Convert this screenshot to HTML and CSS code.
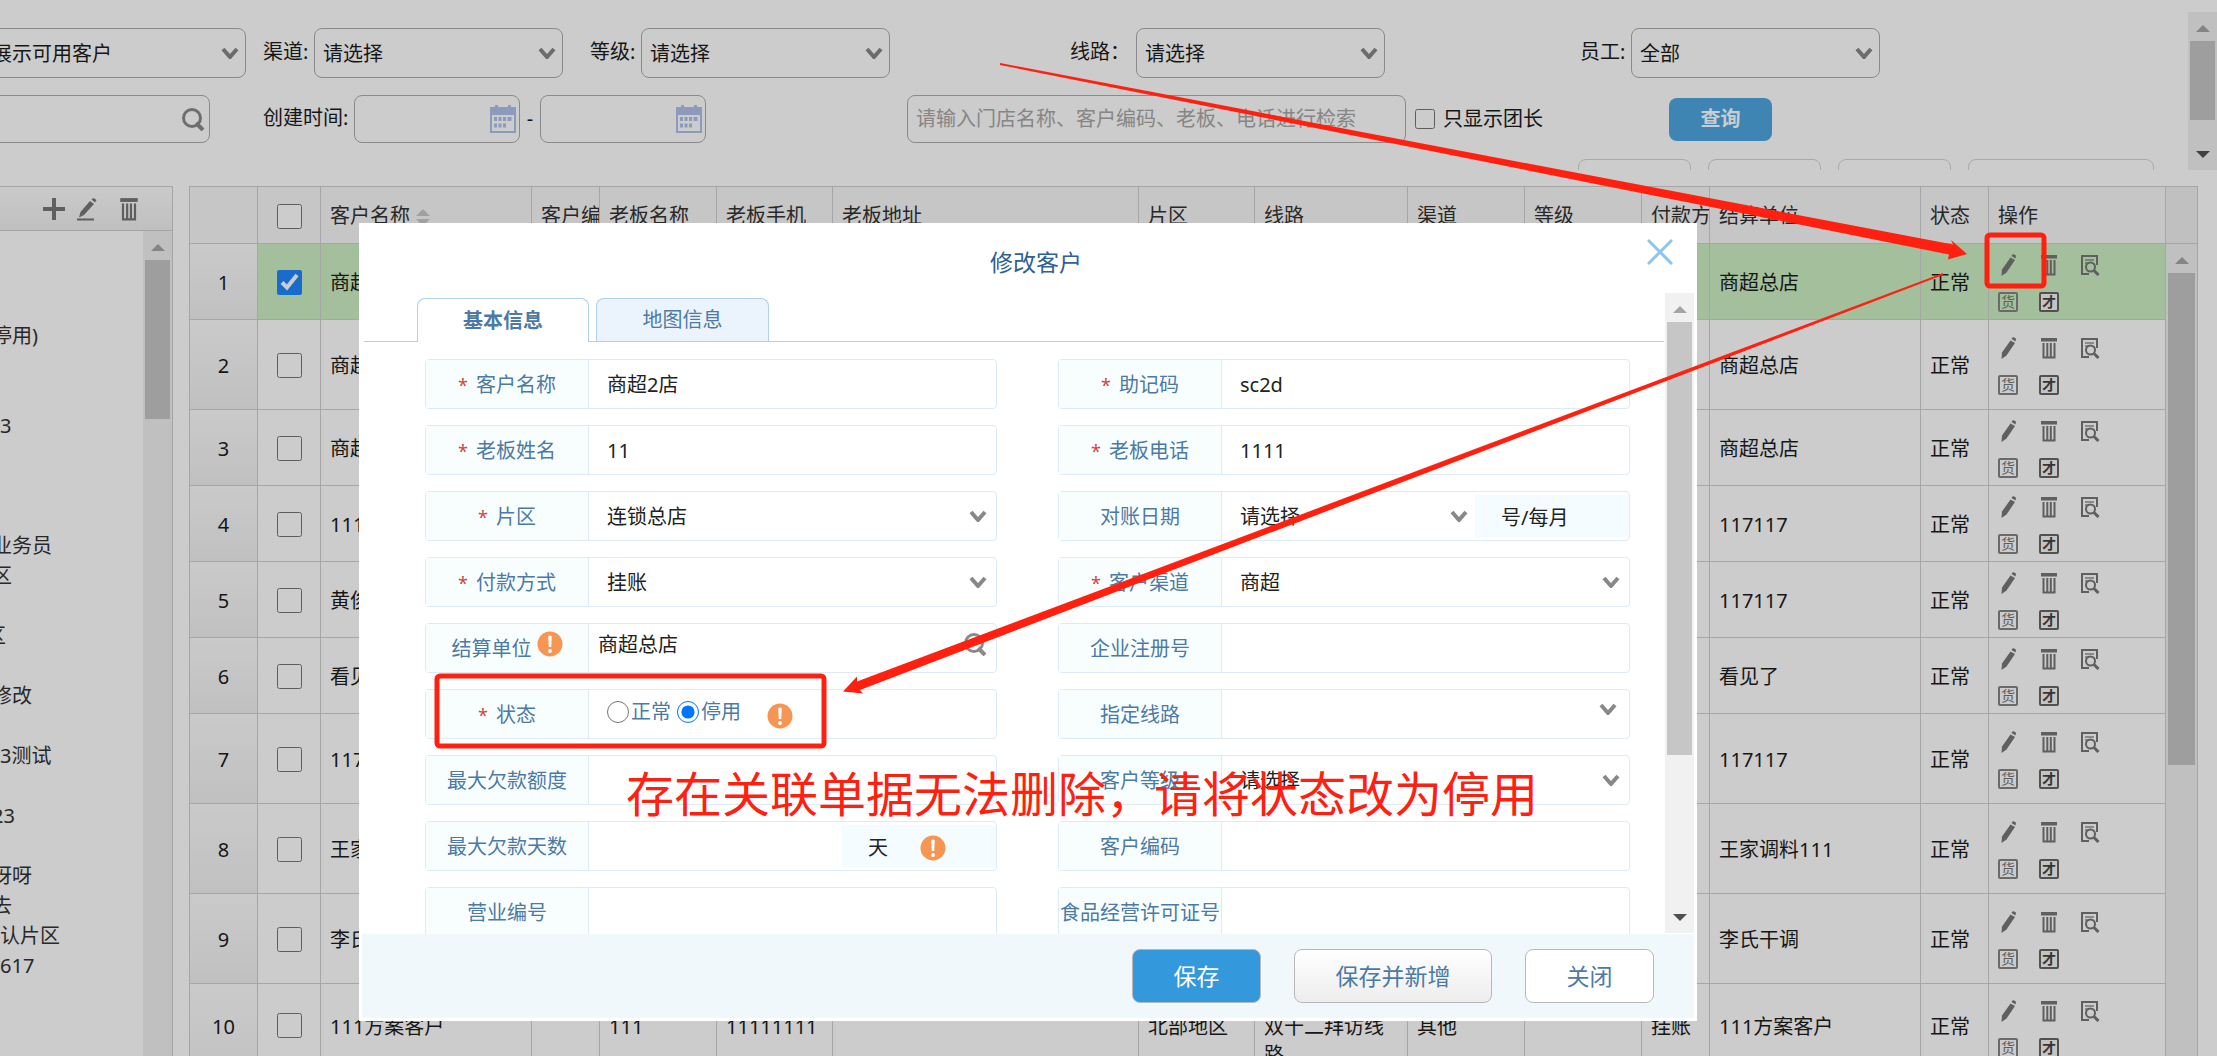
FILE: index.html
```html
<!DOCTYPE html>
<html lang="zh-CN">
<head>
<meta charset="utf-8">
<title>客户管理</title>
<meta name="viewport" content="width=device-width, initial-scale=1">
<link rel="stylesheet" href="styles.css">
</head>
<body>
<svg class="sprite" aria-hidden="true">
  <symbol id="i-pencil" viewBox="0 0 20 22"><path d="M12.500 3.500l4.500 2.500L8.500 18.500 3.500 22l.5-6.500z" fill="currentColor"/><path d="M13.500 2l1.500-2 3 1.500-.5 3z" fill="currentColor"/></symbol>
  <symbol id="i-trash" viewBox="0 0 20 22"><path d="M2 1h16v3.500H2z" fill="currentColor"/><path d="M4.500 6v14.500h11V6M8.300 6v14M11.800 6v14" fill="none" stroke="currentColor" stroke-width="2"/></symbol>
  <symbol id="i-detail" viewBox="0 0 20 22"><path d="M9 20H2V2h15v9" fill="none" stroke="currentColor" stroke-width="2"/><path d="M5 6h9M5 9h4" stroke="currentColor" stroke-width="2" opacity=".6"/><circle cx="10.500" cy="13" r="4.500" fill="none" stroke="currentColor" stroke-width="2"/><path d="M14 16.500l4.500 4.500" stroke="currentColor" stroke-width="3"/></symbol>
  <symbol id="i-plus" viewBox="0 0 24 24"><path d="M12 1v22M1 12h22" stroke="currentColor" stroke-width="4"/></symbol>
  <symbol id="i-edit" viewBox="0 0 22 24"><path d="M14 4l4 3L8 18l-5 2.500 1.500-5.500z" fill="currentColor"/><path d="M15.500 2.500l2-1.500 3 2-1.500 2.500z" fill="currentColor"/><path d="M1 22.500h17" stroke="currentColor" stroke-width="2"/></symbol>
  <symbol id="i-search" viewBox="0 0 24 24"><circle cx="11" cy="11" r="8.500" fill="none" stroke="currentColor" stroke-width="3"/><path d="M15 16l7 7" stroke="currentColor" stroke-width="4"/></symbol>
  <symbol id="i-calendar" viewBox="0 0 26 28"><path d="M1 3h24v24H1z" fill="none" stroke="currentColor" stroke-width="2"/><path d="M1 3h24v7H1zM5 0h3v4H5zM18 0h3v4h-3z" fill="currentColor"/><path d="M4 14h3m1.500 0h3m1.500 0h3m1.500 0h4M4 20.500h3m1.500 0h3m1.500 0h3" stroke="currentColor" stroke-width="4"/></symbol>
  <symbol id="i-alert" viewBox="0 0 26 26"><circle cx="13" cy="13" r="12.500" fill="#f79552"/><path d="M11.200 5.500q1.800-2 3.600 0L14.200 16h-2.400z" fill="#fff"/><circle cx="13" cy="20" r="1.900" fill="#fff"/></symbol>
</svg>

<div class="page">
  <form class="filters">
    <div class="filter-row">
      <select class="pick pick-first" aria-label="客户范围"><option>展示可用客户</option></select>
      <label class="filter-label near" for="f-channel">渠道:</label>
      <select class="pick" id="f-channel"><option>请选择</option></select>
      <label class="filter-label mid" for="f-level">等级:</label>
      <select class="pick" id="f-level"><option>请选择</option></select>
      <label class="filter-label far" for="f-line">线路：</label>
      <select class="pick" id="f-line"><option>请选择</option></select>
      <label class="filter-label farther" for="f-staff">员工:</label>
      <select class="pick" id="f-staff"><option>全部</option></select>
    </div>
    <div class="filter-row">
      <span class="box box-first"><input type="text" aria-label="片区"><svg class="ico-search"><use href="#i-search"/></svg></span>
      <label class="filter-label created" for="f-from">创建时间:</label>
      <span class="box box-date"><input type="text" id="f-from"><svg class="ico-cal"><use href="#i-calendar"/></svg></span>
      <span class="dash">-</span>
      <span class="box box-date"><input type="text" aria-label="结束时间"><svg class="ico-cal"><use href="#i-calendar"/></svg></span>
      <span class="box box-keyword"><input type="text" aria-label="检索" placeholder="请输入门店名称、客户编码、老板、电话进行检索"></span>
      <label class="leader"><input type="checkbox">只显示团长</label>
      <button class="query" type="button">查询</button>
    </div>
    <div class="filter-row tools">
      <button type="button" aria-label="新增"></button><button type="button" aria-label="导入"></button><button type="button" aria-label="导出"></button><button type="button" class="wide" aria-label="批量修改"></button>
    </div>
    <div class="bar bar-page"><i class="up"></i><i class="thumb"></i><i class="down"></i></div>
  </form>

  <main class="content">
    <aside class="tree">
      <div class="tree-tools">
        <button type="button" aria-label="新增"><svg width="24" height="24"><use href="#i-plus"/></svg></button>
        <button type="button" aria-label="编辑"><svg width="22" height="24"><use href="#i-edit"/></svg></button>
        <button type="button" aria-label="删除"><svg width="22" height="24"><use href="#i-trash"/></svg></button>
      </div>
      <div class="tree-body">
        <ul>
          <li></li><li></li><li></li><li class="cut">停用)</li><li></li><li></li><li>3</li><li></li><li></li><li></li>
          <li class="cut">业务员</li><li class="cut">区</li><li></li><li class="cut-more">区</li><li></li><li class="cut">修改</li><li></li><li>3测试</li><li></li>
          <li class="cut">23</li><li></li><li class="cut">呀呀</li><li class="cut">去</li><li>认片区</li><li>617</li>
        </ul>
        <div class="bar bar-tree"><i class="up"></i><i class="thumb"></i></div>
      </div>
    </aside>

    <section class="grid">
      <table>
        <colgroup><col class="w68"><col class="w63"><col class="w211"><col class="w68"><col class="w117"><col class="w116"><col><col class="w116"><col class="w153"><col class="w117"><col class="w117"><col class="w68"><col class="w211"><col class="w68"><col class="w177"></colgroup>
        <thead>
          <tr><th></th><th class="tick"><input type="checkbox" aria-label="全选"></th><th>客户名称<span class="sort"><i class="up"></i><i class="down"></i></span></th><th>客户编码</th><th>老板名称</th><th>老板手机</th><th>老板地址</th><th>片区</th><th>线路</th><th>渠道</th><th>等级</th><th>付款方式</th><th>结算单位</th><th>状态</th><th>操作</th></tr>
        </thead>
        <tbody>
          <tr class="picked"><td class="num">1</td><td class="tick"><input type="checkbox" checked aria-label="选择1"></td><td>商超2店</td><td></td><td></td><td></td><td></td><td></td><td></td><td></td><td></td><td></td><td>商超总店</td><td>正常</td><td class="ops"><div><button type="button" aria-label="编辑"><svg><use href="#i-pencil"/></svg></button><button type="button" aria-label="删除"><svg><use href="#i-trash"/></svg></button><button type="button" aria-label="查看"><svg><use href="#i-detail"/></svg></button><button type="button" class="seal">货</button><button type="button" class="seal dark">才</button></div></td></tr>
          <tr class="tall"><td class="num">2</td><td class="tick"><input type="checkbox" aria-label="选择2"></td><td>商超</td><td></td><td></td><td></td><td></td><td></td><td></td><td></td><td></td><td></td><td>商超总店</td><td>正常</td><td class="ops"><div><button type="button" aria-label="编辑"><svg><use href="#i-pencil"/></svg></button><button type="button" aria-label="删除"><svg><use href="#i-trash"/></svg></button><button type="button" aria-label="查看"><svg><use href="#i-detail"/></svg></button><button type="button" class="seal">货</button><button type="button" class="seal dark">才</button></div></td></tr>
          <tr><td class="num">3</td><td class="tick"><input type="checkbox" aria-label="选择3"></td><td>商超</td><td></td><td></td><td></td><td></td><td></td><td></td><td></td><td></td><td></td><td>商超总店</td><td>正常</td><td class="ops"><div><button type="button" aria-label="编辑"><svg><use href="#i-pencil"/></svg></button><button type="button" aria-label="删除"><svg><use href="#i-trash"/></svg></button><button type="button" aria-label="查看"><svg><use href="#i-detail"/></svg></button><button type="button" class="seal">货</button><button type="button" class="seal dark">才</button></div></td></tr>
          <tr><td class="num">4</td><td class="tick"><input type="checkbox" aria-label="选择4"></td><td>111</td><td></td><td></td><td></td><td></td><td></td><td></td><td></td><td></td><td></td><td>117117</td><td>正常</td><td class="ops"><div><button type="button" aria-label="编辑"><svg><use href="#i-pencil"/></svg></button><button type="button" aria-label="删除"><svg><use href="#i-trash"/></svg></button><button type="button" aria-label="查看"><svg><use href="#i-detail"/></svg></button><button type="button" class="seal">货</button><button type="button" class="seal dark">才</button></div></td></tr>
          <tr><td class="num">5</td><td class="tick"><input type="checkbox" aria-label="选择5"></td><td>黄俊</td><td></td><td></td><td></td><td></td><td></td><td></td><td></td><td></td><td></td><td>117117</td><td>正常</td><td class="ops"><div><button type="button" aria-label="编辑"><svg><use href="#i-pencil"/></svg></button><button type="button" aria-label="删除"><svg><use href="#i-trash"/></svg></button><button type="button" aria-label="查看"><svg><use href="#i-detail"/></svg></button><button type="button" class="seal">货</button><button type="button" class="seal dark">才</button></div></td></tr>
          <tr><td class="num">6</td><td class="tick"><input type="checkbox" aria-label="选择6"></td><td>看见了</td><td></td><td></td><td></td><td></td><td></td><td></td><td></td><td></td><td></td><td>看见了</td><td>正常</td><td class="ops"><div><button type="button" aria-label="编辑"><svg><use href="#i-pencil"/></svg></button><button type="button" aria-label="删除"><svg><use href="#i-trash"/></svg></button><button type="button" aria-label="查看"><svg><use href="#i-detail"/></svg></button><button type="button" class="seal">货</button><button type="button" class="seal dark">才</button></div></td></tr>
          <tr class="tall"><td class="num">7</td><td class="tick"><input type="checkbox" aria-label="选择7"></td><td>117117</td><td></td><td></td><td></td><td></td><td></td><td></td><td></td><td></td><td></td><td>117117</td><td>正常</td><td class="ops"><div><button type="button" aria-label="编辑"><svg><use href="#i-pencil"/></svg></button><button type="button" aria-label="删除"><svg><use href="#i-trash"/></svg></button><button type="button" aria-label="查看"><svg><use href="#i-detail"/></svg></button><button type="button" class="seal">货</button><button type="button" class="seal dark">才</button></div></td></tr>
          <tr class="tall"><td class="num">8</td><td class="tick"><input type="checkbox" aria-label="选择8"></td><td>王家调料111</td><td></td><td></td><td></td><td></td><td></td><td></td><td></td><td></td><td></td><td>王家调料111</td><td>正常</td><td class="ops"><div><button type="button" aria-label="编辑"><svg><use href="#i-pencil"/></svg></button><button type="button" aria-label="删除"><svg><use href="#i-trash"/></svg></button><button type="button" aria-label="查看"><svg><use href="#i-detail"/></svg></button><button type="button" class="seal">货</button><button type="button" class="seal dark">才</button></div></td></tr>
          <tr class="tall"><td class="num">9</td><td class="tick"><input type="checkbox" aria-label="选择9"></td><td>李氏干调</td><td></td><td></td><td></td><td></td><td></td><td></td><td></td><td></td><td></td><td>李氏干调</td><td>正常</td><td class="ops"><div><button type="button" aria-label="编辑"><svg><use href="#i-pencil"/></svg></button><button type="button" aria-label="删除"><svg><use href="#i-trash"/></svg></button><button type="button" aria-label="查看"><svg><use href="#i-detail"/></svg></button><button type="button" class="seal">货</button><button type="button" class="seal dark">才</button></div></td></tr>
          <tr class="wrapped"><td class="num">10</td><td class="tick"><input type="checkbox" aria-label="选择10"></td><td>111方案客户</td><td></td><td>111</td><td>11111111</td><td></td><td>北部地区</td><td class="multi">双十二拜访线路</td><td>其他</td><td></td><td>挂账</td><td>111方案客户</td><td>正常</td><td class="ops"><div><button type="button" aria-label="编辑"><svg><use href="#i-pencil"/></svg></button><button type="button" aria-label="删除"><svg><use href="#i-trash"/></svg></button><button type="button" aria-label="查看"><svg><use href="#i-detail"/></svg></button><button type="button" class="seal">货</button><button type="button" class="seal dark">才</button></div></td></tr>
        </tbody>
      </table>
      <div class="grid-side"><div class="grid-corner"></div><div class="bar bar-grid"><i class="up"></i><i class="thumb"></i></div></div>
    </section>
  </main>
</div>

<div class="shade"></div>

<div class="dialog" role="dialog" aria-labelledby="dialog-title">
  <header class="dialog-head">
    <h1 id="dialog-title">修改客户</h1>
    <button class="close" type="button" aria-label="关闭窗口"><svg width="26" height="26" viewBox="0 0 26 26"><path d="M1 1l24 24M25 1L1 25" stroke="#8cc6ee" stroke-width="3"/></svg></button>
  </header>
  <nav class="tabs"><button type="button" class="tab active">基本信息</button><button type="button" class="tab">地图信息</button></nav>
  <form class="fields">
    <div class="field"><label for="d-name"><b>*</b>客户名称</label><input id="d-name" type="text" value="商超2店"></div>
    <div class="field"><label for="d-code"><b>*</b>助记码</label><input id="d-code" type="text" value="sc2d"></div>
    <div class="field"><label for="d-boss"><b>*</b>老板姓名</label><input id="d-boss" type="text" value="11"></div>
    <div class="field"><label for="d-phone"><b>*</b>老板电话</label><input id="d-phone" type="text" value="1111"></div>
    <div class="field"><label for="d-area"><b>*</b>片区</label><select id="d-area"><option>连锁总店</option></select></div>
    <div class="field with-addon"><label for="d-date">对账日期</label><select id="d-date"><option>请选择</option></select><span class="addon">号/每月</span></div>
    <div class="field"><label for="d-pay"><b>*</b>付款方式</label><select id="d-pay"><option>挂账</option></select></div>
    <div class="field"><label for="d-channel"><b>*</b>客户渠道</label><select id="d-channel"><option>商超</option></select></div>
    <div class="field unit"><label for="d-unit">结算单位<svg class="alert"><use href="#i-alert"/></svg></label><input id="d-unit" type="text" value="商超总店"><svg class="ico-search"><use href="#i-search"/></svg></div>
    <div class="field"><label for="d-reg">企业注册号</label><input id="d-reg" type="text"></div>
    <div class="field"><span class="caption"><b>*</b>状态</span><div class="radios"><label><input type="radio" name="state">正常</label><label><input type="radio" name="state" checked>停用</label><svg class="alert"><use href="#i-alert"/></svg></div></div>
    <div class="field lines"><label for="d-line">指定线路</label><select id="d-line"><option></option></select></div>
    <div class="field"><label for="d-debt">最大欠款额度</label><input id="d-debt" type="text"></div>
    <div class="field"><label for="d-level">客户等级</label><select id="d-level"><option>请选择</option></select></div>
    <div class="field with-addon"><label for="d-days">最大欠款天数</label><input id="d-days" type="text"><span class="addon">天<svg class="alert"><use href="#i-alert"/></svg></span></div>
    <div class="field"><label for="d-no">客户编码</label><input id="d-no" type="text"></div>
    <div class="field"><label for="d-biz">营业编号</label><input id="d-biz" type="text"></div>
    <div class="field"><label for="d-food">食品经营许可证号</label><input id="d-food" type="text"></div>
  </form>
  <footer class="dialog-foot">
    <button type="button" class="save">保存</button>
    <button type="button" class="save-new">保存并新增</button>
    <button type="button" class="cancel">关闭</button>
  </footer>
  <div class="bar bar-dialog"><i class="up"></i><i class="thumb"></i><i class="down"></i></div>
</div>

<svg class="marks" aria-hidden="true">
  <path d="M1000 63L1953 244.500 1951 240 1967 254 1948 259.500 1949 254.500 1000 65z"/>
  <path d="M1943 273L857 681.500 857 676.500 843 691.500 863 693.500 860 690 1943 275z"/>
  <rect x="1987" y="235" width="57" height="51" rx="3"/>
  <rect x="437" y="676" width="387" height="70" rx="3"/>
</svg>
<p class="note">存在关联单据无法删除，请将状态改为停用</p>
</body>
</html>
```
FILE: styles.css
```css
* { box-sizing: border-box; }
body {
  margin: 0;
  height: 100vh;
  overflow: hidden;
  position: relative;
  background: #fff;
  color: #1c1c1c;
  font: 20px/28px "Noto Sans", "Noto Sans CJK SC", sans-serif;
}
button, input, select { font: inherit; color: inherit; margin: 0; padding: 0; }
button { background: none; border: 0; }
ul, p, h1 { margin: 0; padding: 0; }
.sprite { position: absolute; width: 0; height: 0; }
.page { display: flex; flex-direction: column; height: 100%; }

/* filters */
.filters { position: relative; height: 170px; padding-top: 28px; overflow: hidden; flex: none; }
.filter-row { display: flex; align-items: center; height: 50px; margin-bottom: 16px; white-space: nowrap; }
.filter-label { margin-right: 6px; padding-bottom: 2px; }
.near { margin-left: 17px; width: 45px; }
.mid { margin-left: 27px; width: 45px; }
.far { margin-left: 180px; width: 60px; }
.farther { margin-left: 195px; width: 45px; }
.created { margin-left: 53px; width: 85px; }
select {
  appearance: none;
  outline: 0;
  background: url("data:image/svg+xml,%3Csvg xmlns='http://www.w3.org/2000/svg' viewBox='0 0 18 12'%3E%3Cpath d='M2 2l7 8 7-8' fill='none' stroke='%23888' stroke-width='4'/%3E%3C/svg%3E") no-repeat right 6px center / 18px 12px;
}
.pick { width: 249px; height: 50px; padding: 2px 0 0 8px; border: 1px solid #adadad; border-radius: 8px; flex: none; }
.pick-first { width: 263px; margin-left: -17px; }
.box { display: flex; align-items: center; height: 48px; border: 1px solid #adadad; border-radius: 8px; padding: 0 4px 0 8px; flex: none; }
.box input { flex: 1; min-width: 0; border: 0; background: none; outline: 0; }
.box-first { width: 220px; margin-left: -10px; }
.box-date { width: 166px; padding-right: 3px; }
.box-keyword { width: 499px; margin-left: 201px; }
.box-keyword input::placeholder { color: #a8a8a8; opacity: 1; }
.ico-search { width: 24px; height: 24px; color: #8a8a8a; flex: none; }
.ico-cal { width: 26px; height: 28px; color: #b0c2ec; flex: none; }
.dash { width: 20px; text-align: center; }
.leader { display: flex; align-items: center; gap: 8px; margin-left: 9px; width: 254px; }
.leader input { width: 20px; height: 20px; }
.query { width: 103px; height: 43px; border-radius: 8px; background: #4ea7e0; color: #fff; font-weight: 700; }
.tools { align-items: flex-start; justify-content: flex-end; gap: 17px; padding: 0 63px 0 0; margin-top: -1px; }
.tools button { width: 113px; height: 44px; border: 1px solid #d4d4d4; border-radius: 8px; }
.tools .wide { width: 186px; }

/* scroll bars */
.bar { background: #f1f1f1; display: flex; flex-direction: column; align-items: center; padding: 0 2px; }
.bar .thumb { width: 100%; background: #c6c6c6; }
.up, .down { border: 7px solid transparent; flex: none; }
.up { border-top: 0; border-bottom-color: #a5a5a5; }
.down { border-bottom: 0; border-top-color: #505050; }
.bar .up { margin: 13px 0 9px; }
.bar .down { margin: auto 0 12px; }
.bar-page { position: absolute; top: 12px; right: 0; width: 29px; height: 158px; }
.bar-page .thumb { height: 79px; }

/* area tree */
.content { display: flex; flex: 1; min-height: 0; margin-top: 16px; padding-right: 19px; gap: 16px; }
.tree { width: 173px; display: flex; flex-direction: column; border: 1px solid #cfcfcf; border-width: 1px 1px 0 0; flex: none; }
.tree-tools { display: flex; justify-content: flex-end; align-items: center; gap: 10px; height: 44px; padding-right: 32px; background: linear-gradient(#fdfdfd, #f0f0f0); border-bottom: 1px solid #cfcfcf; color: #777; flex: none; }
.tree-tools button:last-child { margin-left: 10px; }
.tree-tools svg { display: block; }
.tree-body { display: flex; flex: 1; min-height: 0; }
.tree ul { flex: 1; list-style: none; overflow: hidden; line-height: 30px; color: #333; }
.tree li { height: 30px; white-space: nowrap; }
.tree .cut { text-indent: -8px; }
.tree .cut-more { text-indent: -14px; }
.bar-tree { width: 29px; }
.bar-tree .thumb { height: 159px; }

/* customer table */
.grid { flex: 1; min-width: 0; display: flex; align-items: flex-start; overflow: hidden; border: 1px solid #cfcfcf; border-bottom: 0; }
table { flex: 1; width: 100%; min-width: 0; table-layout: fixed; border-collapse: separate; border-spacing: 0; }
.w63 { width: 63px; }
.w68 { width: 68px; }
.w116 { width: 116px; }
.w117 { width: 117px; }
.w153 { width: 153px; }
.w177 { width: 177px; }
.w211 { width: 211px; }
th, td { padding: 2px 0 0 9px; border: 1px solid #d0d0d0; border-width: 0 1px 1px 0; font-weight: 400; text-align: left; white-space: nowrap; overflow: hidden; }
th { height: 57px; background: #f8f8f8; color: #333; }
td { height: 76px; }
.tall td { height: 90px; }
.wrapped td { height: 116px; vertical-align: top; padding-top: 29px; }
.wrapped .ops { padding-top: 16px; }
.wrapped .multi { white-space: normal; padding-right: 12px; }
.picked td { background: #ccefc3; }
.picked .num, .num { padding-left: 0; text-align: center; background: linear-gradient(#fdfdfd, #f1f1f1); }
.tick { padding-left: 0; text-align: center; }
.tick input { width: 25px; height: 25px; display: block; margin: 0 auto; accent-color: #2086ff; }
.sort { display: inline-flex; flex-direction: column; gap: 3px; margin-left: 6px; vertical-align: middle; }
.sort .up { border-bottom-color: #c8c8c8; }
.sort .down { border-top-color: #c8c8c8; }
.ops div { display: grid; grid-template-columns: repeat(3, 20px); grid-auto-rows: 20px; gap: 18px 21px; color: #777; }
.ops button { width: 20px; height: 20px; }
.ops svg { display: block; width: 20px; height: 22px; }
.ops .seal { border: 2px solid #858585; border-radius: 2px; font-size: 14px; line-height: 16px; color: #777; }
.ops .dark { border-color: #666; background: #f5f5f5; color: #444; font-weight: 700; }
.grid-side { width: 31px; flex: none; align-self: stretch; display: flex; flex-direction: column; }
.grid-corner { height: 57px; background: #f1f1f1; border-bottom: 1px solid #cfcfcf; flex: none; }
.bar-grid { flex: 1; }
.bar-grid .thumb { height: 492px; }

/* dialog */
.shade { position: absolute; inset: 0; background: rgba(0, 0, 0, .2); }
.dialog { position: absolute; top: 223px; left: 359px; right: 520px; display: flex; flex-direction: column; background: #fff; color: #222; }
.dialog-head { height: 70px; padding: 16px 24px 0 66px; display: flex; align-items: flex-start; }
.dialog-head h1 { flex: 1; padding-top: 7px; text-align: center; font-size: 23px; line-height: 32px; font-weight: 400; color: #2f6096; }
.close svg { display: block; }
.tabs { display: flex; align-items: flex-end; gap: 7px; height: 49px; margin: 0 33px 0 5px; padding-left: 53px; border-bottom: 1px solid #aed2ec; }
.tab { width: 173px; height: 43px; border: 1px solid #aed2ec; border-bottom: 0; border-radius: 8px 8px 0 0; background: #ebf4fc; color: #4c7aa5; }
.tab.active { width: 172px; height: 44px; margin-bottom: -1px; background: #fff; font-weight: 700; }
.fields { display: grid; grid-template-columns: 1fr 1fr; grid-auto-rows: 50px; gap: 16px 61px; align-content: start; height: 592px; padding: 17px 67px 0 66px; overflow: hidden; }
.field { display: flex; border: 1px solid #dcebf7; border-radius: 4px; min-width: 0; }
.field > label, .caption { flex: none; width: 163px; padding-top: 1px; display: flex; align-items: center; justify-content: center; white-space: nowrap; background: #f8fefe; border-right: 1px solid #dcebf7; color: #4c7aa5; }
.field b { margin-right: 8px; color: #d2453e; font-size: 18px; font-weight: 400; }
.field > input, .field > select { flex: 1; min-width: 0; border: 0; outline: 0; padding: 2px 0 0 18px; background-color: transparent; }
.field select { background-position: right 9px center; }
.with-addon select { background-position: right 7px center; }
.lines select { background-position: right 12px top 13px; }
.addon { display: flex; align-items: center; gap: 32px; width: 154px; margin: 3px 0; padding: 3px 0 0 26px; background: #f4fcff; flex: none; }
.alert { width: 26px; height: 26px; flex: none; }
.field.unit > label { gap: 5px; }
.unit .alert { margin-bottom: 10px; }
.field.unit > input { padding: 0 0 7px 9px; }
.unit .ico-search { margin: 8px 9px 0 0; }
.radios { display: flex; align-items: center; padding-left: 18px; color: #4c7aa5; }
.radios label { display: flex; align-items: center; gap: 2px; margin-right: 6px; padding-bottom: 4px; }
.radios input { width: 22px; height: 22px; accent-color: #0075ff; }
.radios .alert { margin: 4px 0 0 20px; }
.dialog-foot { display: flex; justify-content: flex-end; align-items: center; gap: 33px; height: 87px; padding-right: 40px; background: #f0f8fc; border: 3px solid #fff; border-width: 0 3px 3px; }
.dialog-foot button { width: 129px; height: 54px; border: 1px solid #b8b8b8; border-radius: 8px; font-size: 23px; line-height: 32px; color: #4c7aa5; background: #fff; }
.dialog-foot .save { background: #3498dd; color: #fff; }
.dialog-foot .save-new { width: 198px; background: linear-gradient(#fff, #ededed); }
.bar-dialog { position: absolute; top: 70px; right: 3px; width: 29px; height: 640px; }
.bar-dialog .thumb { height: 433px; }

/* red guidance marks */
.marks { position: absolute; top: 0; left: 0; width: 100%; height: 100%; pointer-events: none; }
.marks path { fill: #ff2010; }
.marks rect { fill: none; stroke: #ff2010; stroke-width: 5px; }
.note { position: absolute; left: 626px; top: 764px; font-size: 48px; line-height: 60px; color: #ff2010; white-space: nowrap; }
```
